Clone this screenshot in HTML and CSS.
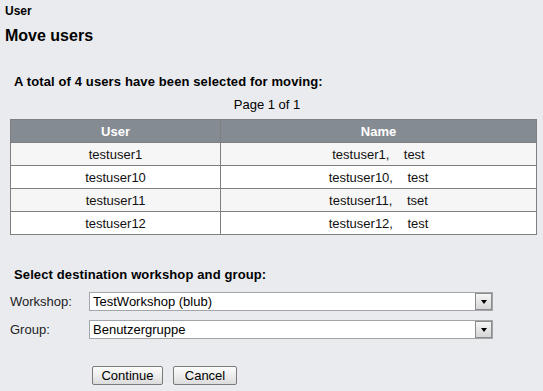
FILE: index.html
```html
<!DOCTYPE html>
<html>
<head>
<meta charset="utf-8">
<link rel="stylesheet" href="styles.css">
</head>
<body>
<div class="crumb">User</div>
<h1 class="title">Move users</h1>
<h2 class="intro">A total of 4 users have been selected for moving:</h2>
<div class="pager">Page 1 of 1</div>
<table class="users">
  <colgroup><col class="c1"><col class="c2"></colgroup>
  <thead>
    <tr><th>User</th><th>Name</th></tr>
  </thead>
  <tbody>
    <tr class="odd"><td>testuser1</td><td>testuser1,&nbsp;&nbsp;&nbsp; test</td></tr>
    <tr><td>testuser10</td><td>testuser10,&nbsp;&nbsp;&nbsp; test</td></tr>
    <tr class="odd"><td>testuser11</td><td>testuser11,&nbsp;&nbsp;&nbsp; tset</td></tr>
    <tr><td>testuser12</td><td>testuser12,&nbsp;&nbsp;&nbsp; test</td></tr>
  </tbody>
</table>
<h2 class="dest">Select destination workshop and group:</h2>
<div class="form">
  <label class="lbl">Workshop:</label>
  <div class="select"><span class="val">TestWorkshop (blub)</span><span class="drop"><span class="tri"></span></span></div>
  <label class="lbl">Group:</label>
  <div class="select"><span class="val">Benutzergruppe</span><span class="drop"><span class="tri"></span></span></div>
</div>
<div class="actions">
  <button class="btn btn-continue">Continue</button>
  <button class="btn btn-cancel">Cancel</button>
</div>
</body>
</html>
```
FILE: styles.css
```css
html, body {
  margin: 0;
  padding: 0;
  background: #eaebef;
  color: #000;
  font-family: "Liberation Sans", Arial, sans-serif;
}
.crumb {
  padding: 4px 0 0 5px;
  font-weight: bold;
  font-size: 12px;
  line-height: 14px;
}
.title {
  margin: 8px 0 0 5px;
  font-size: 16px;
  line-height: 19px;
  font-weight: bold;
}
.intro, .dest {
  margin: 29px 0 0 14px;
  font-size: 13px;
  line-height: 16px;
  font-weight: bold;
  letter-spacing: 0.12px;
}
.dest {
  margin-top: 32px;
}
.pager {
  margin: 7px 0 0 0;
  width: 534px;
  text-align: center;
  font-size: 13px;
  line-height: 16px;
}
.users {
  margin: 6px 0 0 10px;
  width: 527px;
  border-collapse: collapse;
  table-layout: fixed;
  font-size: 13px;
}
.users .c1 { width: 210px; }
.users th, .users td {
  border: 1px solid #7f7f7f;
  padding: 0;
  height: 22px;
  text-align: center;
  vertical-align: middle;
}
.users th {
  background: #858b93;
  color: #fff;
  font-weight: bold;
}
.users td {
  background: #fff;
  color: #111;
}
.users tr.odd td {
  background: #f6f6f6;
}
.form {
  margin: 9px 0 0 10px;
  display: grid;
  grid-template-columns: 79px 404px;
  row-gap: 9px;
  align-items: center;
  font-size: 13px;
}
.lbl {
  color: #222;
}
.select {
  display: flex;
  align-items: stretch;
  height: 19px;
  box-sizing: border-box;
  border: 1px solid #a2a6ab;
  background: #fff;
}
.val {
  flex: 1;
  padding-left: 3px;
  line-height: 17px;
  color: #000;
}
.drop {
  width: 15px;
  border: 1px solid #8c8c8c;
  background: linear-gradient(#f6f6f6, #d6d6d6);
  display: flex;
  align-items: center;
  justify-content: center;
}
.tri {
  width: 0;
  height: 0;
  border-left: 3.5px solid transparent;
  border-right: 3.5px solid transparent;
  border-top: 4px solid #000;
  margin-top: 1px;
}
.actions {
  margin: 27px 0 0 92px;
  display: flex;
  gap: 10px;
}
.btn {
  height: 19px;
  padding: 0;
  box-sizing: border-box;
  border: 1px solid #7a7a7a;
  border-radius: 2px;
  background: linear-gradient(#fdfdfd, #dcdcdc);
  font-family: "Liberation Sans", Arial, sans-serif;
  font-size: 13px;
  color: #000;
  line-height: 16px;
}
.btn-continue { width: 71px; }
.btn-cancel { width: 64px; }
```
